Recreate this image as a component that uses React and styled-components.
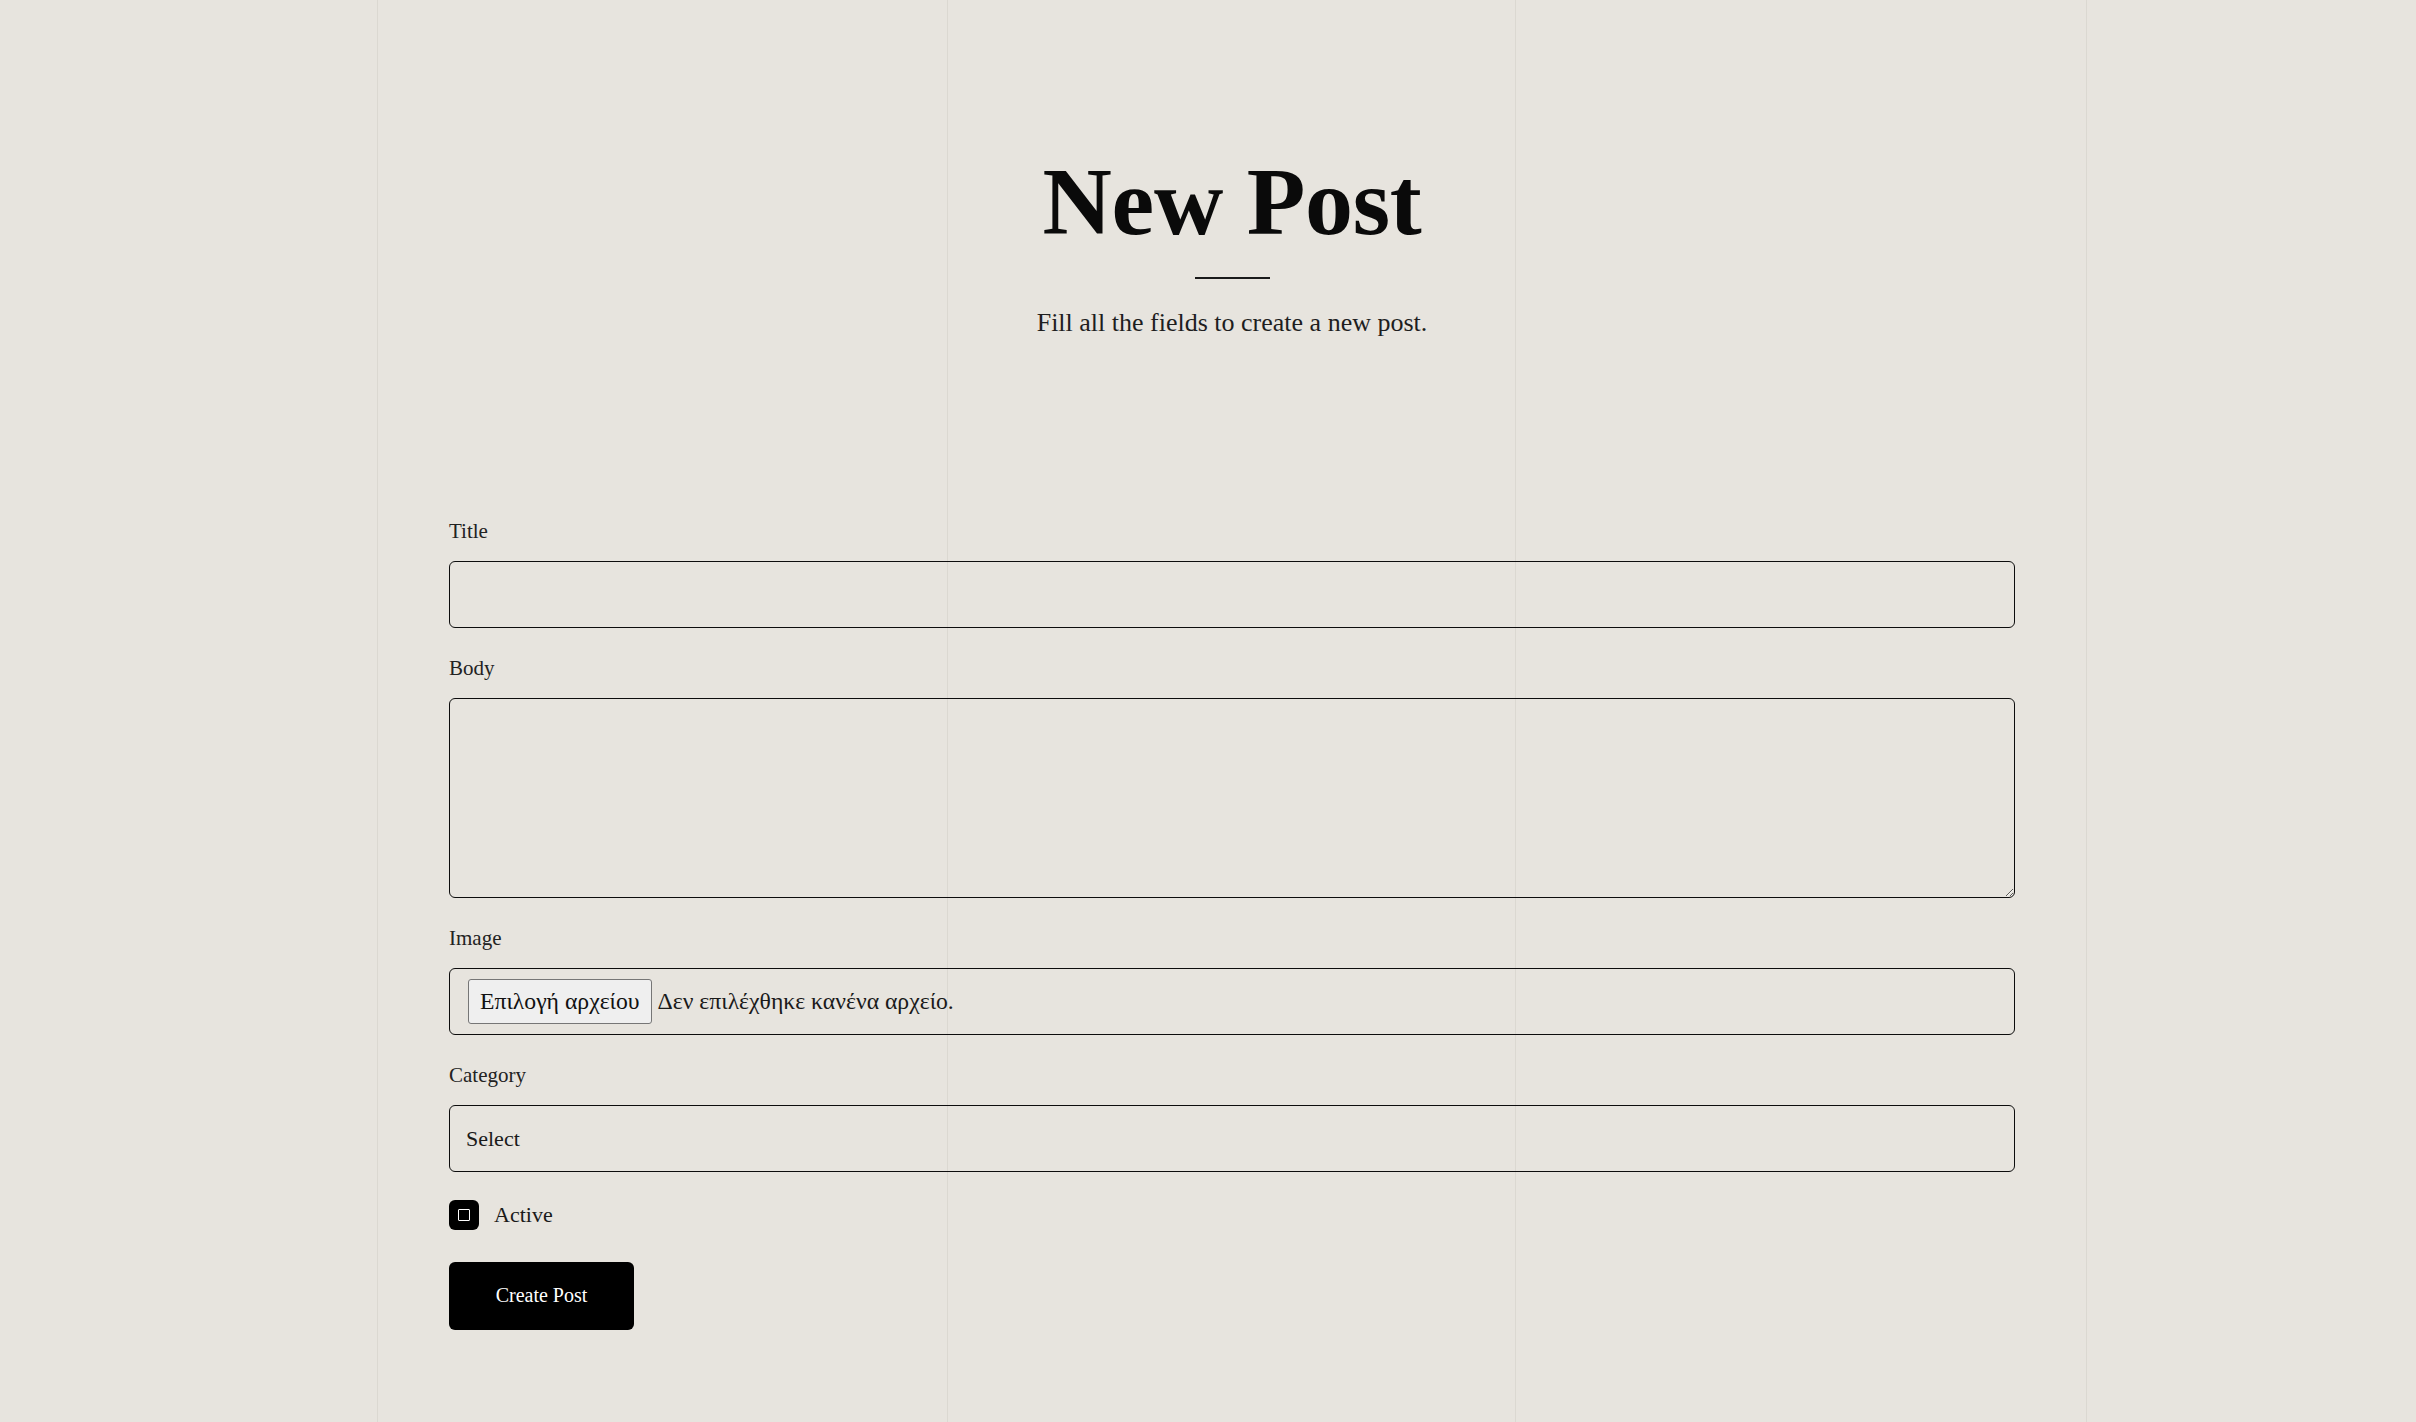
import React from "react";
import styled, { createGlobalStyle } from "styled-components";

const GlobalStyle = createGlobalStyle`
  html, body {
    margin: 0;
    padding: 0;
    background: #e7e4de;
    font-family: "Liberation Serif", "Times New Roman", serif;
    color: #1c1c1c;
  }
  * { box-sizing: border-box; }
`;

const Page = styled.div`
  min-height: 100vh;
  padding-left: 48px;
  overflow: hidden;
`;

const lineColor = "#dbd8d1";

const Container = styled.main`
  width: 1710px;
  margin: 0 auto;
  min-height: 100vh;
  padding: 149px 72px 40px;
  background:
    linear-gradient(${lineColor}, ${lineColor}) 0 0 / 1px 100% no-repeat,
    linear-gradient(${lineColor}, ${lineColor}) 570px 0 / 1px 100% no-repeat,
    linear-gradient(${lineColor}, ${lineColor}) 1138px 0 / 1px 100% no-repeat,
    linear-gradient(${lineColor}, ${lineColor}) 1709px 0 / 1px 100% no-repeat;
`;

const Header = styled.header`
  display: flex;
  flex-direction: column;
  align-items: center;
  text-align: center;
`;

const Title = styled.h1`
  margin: 0;
  font-family: "Liberation Serif", "Times New Roman", serif;
  font-weight: 700;
  font-size: 96px;
  line-height: 1.1;
  color: #0a0a0a;
  letter-spacing: -0.3px;
`;

const Divider = styled.div`
  width: 75px;
  height: 2px;
  background: #1a1a1a;
  margin-top: 22px;
`;

const Subtitle = styled.p`
  margin: 26px 0 0;
  font-size: 26px;
  line-height: 36px;
  color: #1e1e1e;
`;

const Form = styled.form`
  margin-top: 178px;
  display: flex;
  flex-direction: column;
  gap: 28px;
`;

const Field = styled.div`
  display: flex;
  flex-direction: column;
`;

const Label = styled.label`
  font-size: 21px;
  line-height: 24px;
  color: #222;
  margin-bottom: 18px;
`;

const controlBase = `
  width: 100%;
  border: 1px solid #0d0d0d;
  border-radius: 6px;
  background: transparent;
  font-family: "Liberation Serif", "Times New Roman", serif;
  font-size: 22px;
  color: #1a1a1a;
  outline: none;
`;

const TextInput = styled.input`
  ${controlBase}
  height: 67px;
  padding: 0 17px;
`;

const TextArea = styled.textarea`
  ${controlBase}
  height: 200px;
  padding: 14px 17px;
  resize: vertical;
  display: block;
`;

const FileBox = styled.label`
  ${controlBase}
  height: 67px;
  padding: 0 18px;
  display: flex;
  align-items: center;
  gap: 6px;
  cursor: pointer;
`;

const HiddenFile = styled.input`
  display: none;
`;

const FileButton = styled.span`
  display: inline-flex;
  align-items: center;
  height: 45px;
  padding: 0 11px;
  background: #efefef;
  border: 1px solid #767676;
  border-radius: 3px;
  font-size: 23.7px;
  color: #111;
`;

const FileText = styled.span`
  font-size: 23.7px;
  color: #1a1a1a;
`;

const Select = styled.select`
  ${controlBase}
  height: 67px;
  padding: 0 16px;
  appearance: none;
  -webkit-appearance: none;
`;

const CheckRow = styled.label`
  display: flex;
  align-items: center;
  gap: 15px;
  font-size: 22px;
  line-height: 30px;
  color: #1a1a1a;
  cursor: pointer;
`;

const CheckBoxBox = styled.span`
  width: 30px;
  height: 30px;
  border-radius: 6px;
  background: #000;
  display: flex;
  align-items: center;
  justify-content: center;
  flex: none;
`;

const CheckBoxInner = styled.span`
  width: 12px;
  height: 12px;
  border: 1.5px solid #fff;
  border-radius: 1px;
`;

const SubmitRow = styled.div`
  margin-top: 4px;
`;

const SubmitButton = styled.button`
  width: 185px;
  height: 68px;
  border: none;
  border-radius: 6px;
  background: #000;
  color: #fff;
  font-family: "Liberation Serif", "Times New Roman", serif;
  font-size: 20px;
  cursor: pointer;
`;

export default function App() {
  return (
    <>
      <GlobalStyle />
      <Page>
        <Container>
          <Header>
            <Title>New Post</Title>
            <Divider />
            <Subtitle>Fill all the fields to create a new post.</Subtitle>
          </Header>
          <Form onSubmit={(e) => e.preventDefault()}>
            <Field>
              <Label htmlFor="title">Title</Label>
              <TextInput id="title" type="text" />
            </Field>
            <Field>
              <Label htmlFor="body">Body</Label>
              <TextArea id="body" />
            </Field>
            <Field>
              <Label htmlFor="image">Image</Label>
              <FileBox>
                <HiddenFile id="image" type="file" />
                <FileButton>Επιλογή αρχείου</FileButton>
                <FileText>Δεν επιλέχθηκε κανένα αρχείο.</FileText>
              </FileBox>
            </Field>
            <Field>
              <Label htmlFor="category">Category</Label>
              <Select id="category" defaultValue="">
                <option value="">Select</option>
              </Select>
            </Field>
            <CheckRow>
              <CheckBoxBox>
                <CheckBoxInner />
              </CheckBoxBox>
              Active
            </CheckRow>
            <SubmitRow>
              <SubmitButton type="submit">Create Post</SubmitButton>
            </SubmitRow>
          </Form>
        </Container>
      </Page>
    </>
  );
}
